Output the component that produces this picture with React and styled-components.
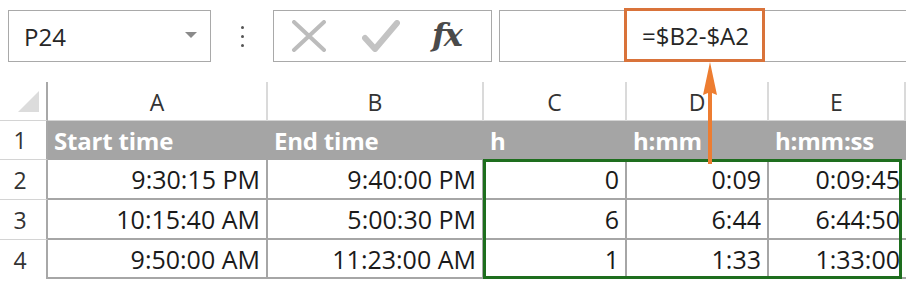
import styled, { createGlobalStyle } from "styled-components";

const GlobalStyle = createGlobalStyle`
  html, body {
    margin: 0;
    padding: 0;
    background: #ffffff;
    font-family: "Open Sans", "Liberation Sans", sans-serif;
    overflow: hidden;
  }
`;

const columns = ["A", "B", "C", "D", "E"];
const titles = ["Start time", "End time", "h", "h:mm", "h:mm:ss"];
const rows = [
  ["9:30:15 PM", "9:40:00 PM", "0", "0:09", "0:09:45"],
  ["10:15:40 AM", "5:00:30 PM", "6", "6:44", "6:44:50"],
  ["9:50:00 AM", "11:23:00 AM", "1", "1:33", "1:33:00"],
];

export default function App() {
  return (
    <Page>
      <GlobalStyle />
      <Toolbar>
        <NameBox>
          <span>P24</span>
          <DropArrow />
        </NameBox>
        <Grip>
          <i />
          <i />
          <i />
        </Grip>
        <FuncBox>
          <svg width="36" height="32" viewBox="0 0 36 32">
            <path
              d="M3 2 L33 30 M33 2 L3 30"
              stroke="#bcbcbc"
              strokeWidth="4"
              strokeLinecap="round"
              fill="none"
            />
          </svg>
          <svg width="38" height="32" viewBox="0 0 38 32">
            <path
              d="M3 18 L13 29 L35 3"
              stroke="#c3c3c3"
              strokeWidth="6"
              strokeLinecap="round"
              strokeLinejoin="round"
              fill="none"
            />
          </svg>
          <Fx>fx</Fx>
        </FuncBox>
        <FormulaBox>
          <Highlight>=$B2-$A2</Highlight>
        </FormulaBox>
      </Toolbar>

      <Sheet>
        <Corner />
        {columns.map((c) => (
          <ColHead key={c}>{c}</ColHead>
        ))}
        <RowHead>1</RowHead>
        {titles.map((t) => (
          <TitleCell key={t}>{t}</TitleCell>
        ))}
        {rows.map((r, i) => [
          <RowHead key={"h" + i} $last={i === rows.length - 1}>
            {i + 2}
          </RowHead>,
          ...r.map((v, j) => (
            <DataCell key={i + "-" + j} $edge={j === 4}>
              {v}
            </DataCell>
          )),
        ])}
        <Selection />
        <Arrow width="20" height="102" viewBox="0 0 20 102">
          <path d="M10 0 L17 33 L12 31 L12 102 L8 102 L8 31 L3 33 Z" fill="#ed7d31" />
        </Arrow>
      </Sheet>
    </Page>
  );
}

const Page = styled.div`
  width: 906px;
  height: 282px;
  position: relative;
`;

const Toolbar = styled.div`
  display: flex;
  height: 52px;
  padding: 10px 0 0 8px;
`;

const NameBox = styled.div`
  width: 203px;
  box-sizing: border-box;
  border: 1px solid #a9a9a9;
  display: flex;
  align-items: center;
  justify-content: space-between;
  padding: 0 13px 0 15px;
  font-size: 24px;
  color: #262626;
  background: #fff;
`;

const DropArrow = styled.span`
  width: 0;
  height: 0;
  border-left: 6px solid transparent;
  border-right: 6px solid transparent;
  border-top: 6px solid #8a8a8a;
  margin-top: -2px;
`;

const Grip = styled.div`
  width: 62px;
  display: flex;
  flex-direction: column;
  align-items: center;
  justify-content: center;
  gap: 6px;

  i {
    display: block;
    width: 3px;
    height: 3px;
    border-radius: 50%;
    background: #555;
  }
`;

const FuncBox = styled.div`
  width: 219px;
  box-sizing: border-box;
  border: 1px solid #a9a9a9;
  display: flex;
  align-items: center;
  padding: 0 0 0 17px;
  gap: 36px;
  background: #fff;

  svg:nth-child(2) {
    margin-left: -1px;
  }
`;

const Fx = styled.span`
  font-family: "DejaVu Serif", "Liberation Serif", serif;
  font-style: italic;
  font-weight: 700;
  font-size: 32px;
  color: #4a4a4a;
  margin-left: -4px;
  letter-spacing: -2px;
  line-height: 1;
  margin-top: -2px;
`;

const FormulaBox = styled.div`
  flex: 1;
  margin-left: 7px;
  box-sizing: border-box;
  border: 1px solid #a9a9a9;
  border-right: none;
  display: flex;
  background: #fff;
`;

const Highlight = styled.div`
  margin: -3px 0 -1px 124px;
  border: 3px solid #d9733a;
  display: flex;
  align-items: center;
  padding: 0 13px 0 15px;
  font-size: 24px;
  color: #262626;
`;

const Sheet = styled.div`
  margin-top: 20px;
  display: grid;
  grid-template-columns: 48px 220px 216px 143px 142px 137px;
  grid-template-rows: 39px 39px 40px 40px 39px;
  position: relative;
  font-size: 25px;
  color: #1a1a1a;
`;

const Corner = styled.div`
  border-right: 2px solid #a8a8a8;
  border-bottom: 1px solid #d4d4d4;
  position: relative;

  &::after {
    content: "";
    position: absolute;
    right: 7px;
    bottom: 8px;
    width: 21px;
    height: 21px;
    background: #dcdcdc;
    clip-path: polygon(100% 0, 100% 100%, 0 100%);
  }
`;

const ColHead = styled.div`
  border-right: 2px solid #dadada;
  border-bottom: 1px solid #d4d4d4;
  display: flex;
  align-items: center;
  justify-content: center;
  font-size: 23px;
  color: #333;
  padding-top: 2px;
`;

const RowHead = styled.div`
  border-right: 2px solid #a8a8a8;
  border-bottom: ${(p) => (p.$last ? "none" : "1px solid #d4d4d4")};
  display: flex;
  align-items: center;
  justify-content: center;
  font-size: 23px;
  color: #333;
  padding-right: 6px;
`;

const TitleCell = styled.div`
  background: #a5a5a5;
  color: #fff;
  font-weight: 700;
  font-size: 24px;
  display: flex;
  align-items: center;
  padding-left: 6px;
  letter-spacing: -0.2px;
`;

const DataCell = styled.div`
  border-right: ${(p) => (p.$edge ? "none" : "2px solid #a6a6a6")};
  border-bottom: 2px solid #a6a6a6;
  display: flex;
  align-items: center;
  justify-content: flex-end;
  padding-right: 6px;
  background: #fff;
`;

const Selection = styled.div`
  position: absolute;
  left: 483px;
  top: 77px;
  width: 419px;
  height: 120px;
  box-sizing: border-box;
  border: 3px solid #1e6e1e;
  pointer-events: none;
`;

const Arrow = styled.svg`
  position: absolute;
  left: 700px;
  top: -20px;
  display: block;
`;
